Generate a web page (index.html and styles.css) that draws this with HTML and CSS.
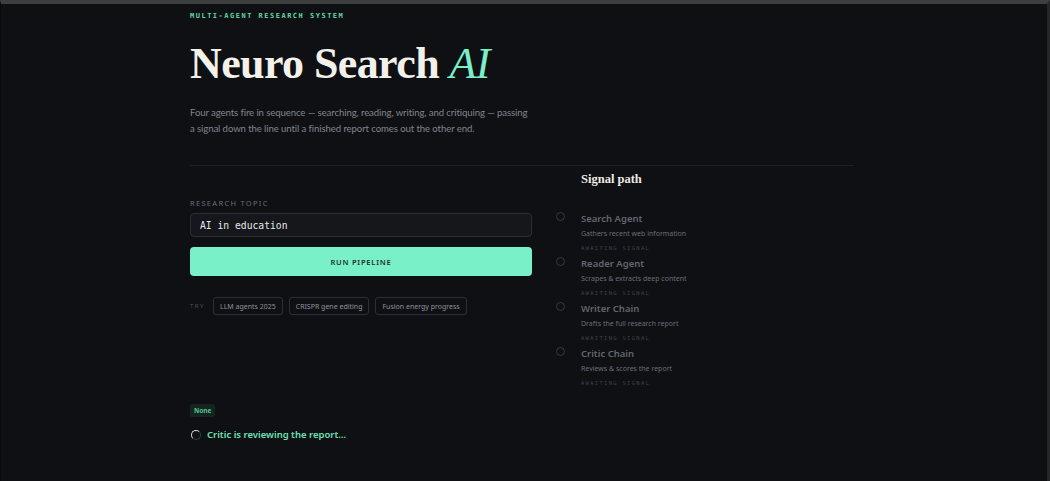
FILE: index.html
```html
<!DOCTYPE html>
<html lang="en">
<head>
  <meta charset="UTF-8">
  <title>Neuro Search AI</title>
  <link rel="stylesheet" href="styles.css">
</head>
<body>
  <div class="frame">
    <main class="wrap">
      <header class="hero">
        <div class="eyebrow">MULTI-AGENT RESEARCH SYSTEM</div>
        <h1 class="title">Neuro Search <em>AI</em></h1>
        <p class="lede">Four agents fire in sequence — searching, reading, writing, and critiquing — passing a signal down the line until a finished report comes out the other end.</p>
      </header>

      <section class="grid">
        <div class="form">
          <label class="label" for="topic">RESEARCH TOPIC</label>
          <input class="input" id="topic" type="text" value="AI in education">
          <button class="run">RUN PIPELINE</button>
          <div class="try">
            <span class="try-label">TRY</span>
            <button class="chip">LLM agents 2025</button>
            <button class="chip">CRISPR gene editing</button>
            <button class="chip">Fusion energy progress</button>
          </div>
        </div>

        <aside class="path">
          <h2 class="path-title">Signal path</h2>
          <ul class="steps">
            <li class="step">
              <span class="dot"></span>
              <div>
                <div class="step-name">Search Agent</div>
                <div class="step-desc">Gathers recent web information</div>
                <div class="step-state">AWAITING SIGNAL</div>
              </div>
            </li>
            <li class="step">
              <span class="dot"></span>
              <div>
                <div class="step-name">Reader Agent</div>
                <div class="step-desc">Scrapes &amp; extracts deep content</div>
                <div class="step-state">AWAITING SIGNAL</div>
              </div>
            </li>
            <li class="step">
              <span class="dot"></span>
              <div>
                <div class="step-name">Writer Chain</div>
                <div class="step-desc">Drafts the full research report</div>
                <div class="step-state">AWAITING SIGNAL</div>
              </div>
            </li>
            <li class="step">
              <span class="dot"></span>
              <div>
                <div class="step-name">Critic Chain</div>
                <div class="step-desc">Reviews &amp; scores the report</div>
                <div class="step-state">AWAITING SIGNAL</div>
              </div>
            </li>
          </ul>
        </aside>
      </section>

      <section class="status">
        <span class="badge">None</span>
        <div class="progress">
          <span class="spinner"></span>
          <span>Critic is reviewing the report…</span>
        </div>
      </section>
    </main>
  </div>
</body>
</html>
```

FILE: styles.css
```css
:root {
  --bg: #0e1014;
  --line: #1d2025;
  --border: #2b2e34;
  --mint: #7af0c8;
  --green: #5fd8a6;
  --muted: #80858d;
  --dim: #5c6067;
  --sans: "Noto Sans", "Open Sans", sans-serif;
  --mono: "DejaVu Sans Mono", "Liberation Mono", monospace;
  --serif: "Liberation Serif", "DejaVu Serif", serif;
}
* { box-sizing: border-box; margin: 0; padding: 0; }
html, body { height: 100%; }
body {
  background: var(--bg);
  color: #ececec;
  font-family: var(--sans);
}
ul { list-style: none; }
button, input { font: inherit; }

.frame {
  min-height: 100%;
  border-top: 4px solid #3d3e3f;
  border-left: 1px solid #08090b;
  border-right: 3px solid #262729;
  padding-right: 4px;
}
.wrap {
  width: 664px;
  margin: 0 auto;
  padding-top: 8px;
}

.eyebrow {
  font-family: var(--mono);
  font-size: 7px;
  font-weight: bold;
  letter-spacing: 1.5px;
  color: var(--green);
}
.title {
  margin-top: 22px;
  font-family: var(--serif);
  font-size: 44px;
  font-weight: bold;
  line-height: 1;
  color: #f3f1ea;
  letter-spacing: -0.6px;
}
.title em { color: var(--mint); font-weight: normal; }
.lede {
  margin-top: 19px;
  width: 338px;
  font-family: Lato, sans-serif;
  font-size: 9.6px;
  line-height: 16px;
  letter-spacing: -0.1px;
  color: var(--muted);
}

.grid {
  display: grid;
  grid-template-columns: 342px 1fr;
  gap: 24px;
  margin-top: 28px;
  border-top: 1px solid var(--line);
}

.form { padding-top: 32px; }
.label {
  display: block;
  font-size: 7.5px;
  letter-spacing: 1.3px;
  color: #6a6e75;
}
.input {
  display: block;
  width: 100%;
  height: 24px;
  margin-top: 5px;
  padding: 0 9px;
  background: #15171c;
  border: 1px solid var(--border);
  border-radius: 4px;
  color: #e8e8e8;
  font-family: var(--mono);
  font-size: 9.7px;
  outline: none;
}
.run {
  display: block;
  width: 100%;
  height: 29px;
  margin-top: 10px;
  background: var(--mint);
  border: 0;
  border-radius: 4px;
  color: #1a342b;
  font-size: 7.5px;
  font-weight: 600;
  letter-spacing: 0.8px;
}
.try {
  display: flex;
  align-items: center;
  gap: 6px;
  margin-top: 21px;
}
.try-label {
  margin-right: 2px;
  font-size: 6px;
  letter-spacing: 1.5px;
  color: #4b4f56;
}
.chip {
  height: 18px;
  padding: 0 6px;
  background: transparent;
  border: 1px solid var(--border);
  border-radius: 3px;
  color: #8e939a;
  font-size: 7px;
}

.path { padding-top: 6px; }
.path-title {
  margin-left: 25px;
  font-family: var(--serif);
  font-size: 12.5px;
  font-weight: bold;
  color: #eeeae2;
}
.steps {
  display: flex;
  flex-direction: column;
  gap: 6px;
  margin-top: 26px;
}
.step {
  display: flex;
  gap: 16px;
}
.dot {
  flex-shrink: 0;
  width: 9px;
  height: 9px;
  margin-top: -1px;
  border: 1px solid #363a40;
  border-radius: 50%;
}
.step-name {
  font-size: 9.5px;
  font-weight: 600;
  line-height: 12px;
  color: #62666e;
}
.step-desc {
  margin-top: 4px;
  font-size: 7px;
  line-height: 10px;
  color: #6a6e75;
}
.step-state {
  margin-top: 5px;
  font-family: var(--mono);
  font-size: 5.5px;
  line-height: 8px;
  letter-spacing: 1.3px;
  color: #3e4148;
}

.status { margin-top: 9px; }
.badge {
  display: inline-block;
  padding: 2px 4px;
  background: #15241e;
  border-radius: 2px;
  color: #53c58e;
  font-size: 6.5px;
  font-weight: bold;
}
.progress {
  display: flex;
  align-items: center;
  gap: 6px;
  margin-top: 10px;
  padding-left: 1px;
  color: #6fe0b2;
  font-size: 9.5px;
  font-weight: 600;
}
.spinner {
  width: 10px;
  height: 10px;
  border: 1.5px solid #3a3d42;
  border-top-color: #d8d8d8;
  border-left-color: #d8d8d8;
  border-radius: 50%;
}
```
